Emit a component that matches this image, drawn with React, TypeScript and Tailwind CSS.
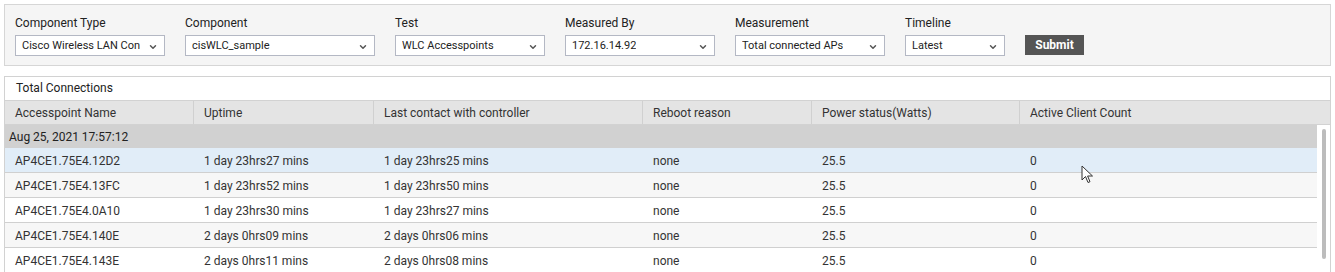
import { ChevronDown } from 'lucide-react';

const filters = [
  { label: 'Component Type', value: 'Cisco Wireless LAN Con', w: 'w-[150px]' },
  { label: 'Component', value: 'cisWLC_sample', w: 'w-[190px]' },
  { label: 'Test', value: 'WLC Accesspoints', w: 'w-[150px]' },
  { label: 'Measured By', value: '172.16.14.92', w: 'w-[150px]' },
  { label: 'Measurement', value: 'Total connected APs', w: 'w-[150px]' },
  { label: 'Timeline', value: 'Latest', w: 'w-[100px]' },
];

const columns = [
  'Accesspoint Name',
  'Uptime',
  'Last contact with controller',
  'Reboot reason',
  'Power status(Watts)',
  'Active Client Count',
];

const rows = [
  ['AP4CE1.75E4.12D2', '1 day 23hrs27 mins', '1 day 23hrs25 mins', 'none', '25.5', '0'],
  ['AP4CE1.75E4.13FC', '1 day 23hrs52 mins', '1 day 23hrs50 mins', 'none', '25.5', '0'],
  ['AP4CE1.75E4.0A10', '1 day 23hrs30 mins', '1 day 23hrs27 mins', 'none', '25.5', '0'],
  ['AP4CE1.75E4.140E', '2 days 0hrs09 mins', '2 days 0hrs06 mins', 'none', '25.5', '0'],
  ['AP4CE1.75E4.143E', '2 days 0hrs11 mins', '2 days 0hrs08 mins', 'none', '25.5', '0'],
];

const grid = 'grid grid-cols-[189px_180px_269px_169px_208px_1fr]';

const rowBg = (i: number) => {
  if (i === 0) return 'bg-[#e1edf8]';
  return i % 2 === 1 ? 'bg-[#f7f7f7]' : 'bg-white';
};

export default function App() {
  return (
    <div className="relative h-[272px] w-[1335px] overflow-hidden bg-white font-['Roboto',sans-serif] text-[12px] text-[#333]">
      {/* Filter bar */}
      <div className="mx-[4px] mt-[4px] flex h-[62px] gap-[20px] border border-[#d6d6d6] bg-[#f5f5f5] pl-[10px] pt-[10px]">
        {filters.map((f) => (
          <div key={f.label} className="flex flex-col">
            <span className="h-[20px] leading-[16px] text-[#222]">{f.label}</span>
            <div
              className={`flex h-[21px] items-center justify-between border border-[#b4b8c4] bg-white pl-[6px] pr-[6px] pt-[2px] text-[11px] text-[#222] ${f.w}`}
            >
              <span className="truncate whitespace-nowrap">{f.value}</span>
              <ChevronDown size={10} strokeWidth={3.5} className="shrink-0 text-[#555]" />
            </div>
          </div>
        ))}
        <div className="flex flex-col">
          <span className="h-[20px]" />
          <button className="h-[20px] w-[59px] bg-[#555] text-[12px] font-bold text-white">Submit</button>
        </div>
      </div>

      {/* Table panel */}
      <div className="mx-[4px] mt-[10px] border border-[#d2d2d2]">
        <div className="flex h-[23px] items-center pb-[1px] pl-[11px] text-[#222]">Total Connections</div>
        <div className={`${grid} h-[25px] border-y border-[#d2d2d2] bg-[#e4e4e4]`}>
          {columns.map((c, i) => (
            <div
              key={c}
              className={`flex items-center pl-[10px] text-[#333] ${i < columns.length - 1 ? 'border-r border-[#d0d0d0]' : ''}`}
            >
              {c}
            </div>
          ))}
        </div>
        <div className="flex">
          <div className="w-[1312px]">
            <div className="flex h-[23px] items-center bg-[#d1d1d1] pl-[4px] text-[#222]">Aug 25, 2021 17:57:12</div>
            {rows.map((r, i) => (
              <div key={r[0]} className={`${grid} h-[25px] border-b border-[#d0d0d0] ${rowBg(i)}`}>
                {r.map((cell, j) => (
                  <div key={j} className="flex items-center pl-[10px] pt-[2px]">
                    {cell}
                  </div>
                ))}
              </div>
            ))}
          </div>
          <div className="flex flex-1 justify-center bg-white pt-[4px]">
            <div className="h-[130px] w-[4px] rounded-full bg-[#bcbcbc]" />
          </div>
        </div>
      </div>

      {/* Mouse cursor */}
      <svg className="absolute left-[1081px] top-[165px]" width="13" height="20" viewBox="0 0 13 20">
        <path
          d="M1 1 L1 15 L4.5 11.5 L7 17.5 L9 16.7 L6.6 11 L11.5 11 Z"
          fill="white"
          stroke="#333"
          strokeWidth="1"
          strokeLinejoin="round"
        />
      </svg>
    </div>
  );
}
